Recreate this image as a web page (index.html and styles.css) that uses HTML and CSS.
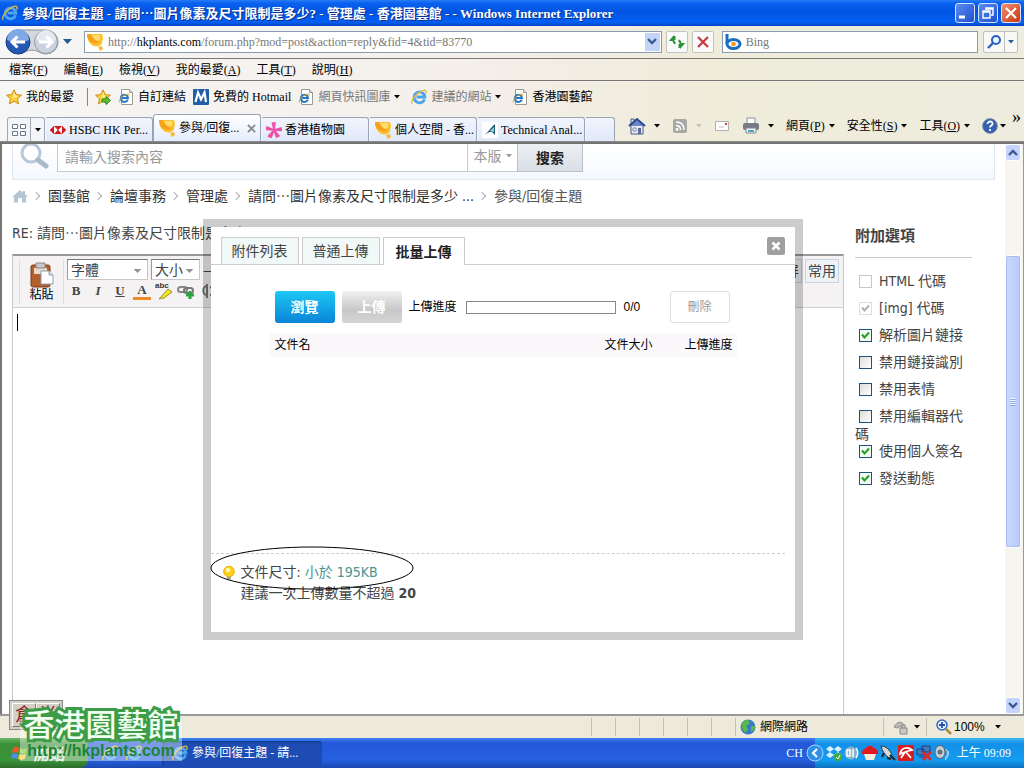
FILE: index.html
```html
<!DOCTYPE html>
<html lang="zh-Hant">
<head>
<meta charset="utf-8">
<title>參與/回復主題 - 管理處 - 香港園藝館</title>
<link rel="stylesheet" href="styles.css">
</head>
<body>
<svg class="defs" aria-hidden="true">
  <symbol id="ie" viewBox="0 0 16 16">
    <path d="M13.600 10.200A5.400 5.400 0 1 1 13.900 8H5.500" fill="none" stroke="#4aa4f0" stroke-width="2.800"/>
    <path d="M1.200 14.800C-.8 12 5 4.300 11 1.800c4-1.600 4.800.4 3.600 2.800" fill="none" stroke="#e8b830" stroke-width="1.300"/>
  </symbol>
  <symbol id="iepage" viewBox="0 0 16 16">
    <path d="M3.500.5h8l3 3v12h-11z" fill="#fff" stroke="#9a9a90"/>
    <path d="M11.500.5v3h3" fill="#ddd" stroke="#9a9a90"/>
    <path d="M9.800 10.600A3.600 3.600 0 1 1 10 9H4" fill="none" stroke="#2578c8" stroke-width="2"/>
    <path d="M1.500 13.500C0 11 5 6.500 9 5.200c2-.6 2.400.3 1.800 1.400" fill="none" stroke="#dca820"/>
  </symbol>
  <symbol id="duck" viewBox="0 0 18 18">
    <path d="M1 1h15l1 4-1 5c-1 3-5 4-8 3C4 12 1 7 1 1z" fill="#fbc02d"/>
    <path d="M1 1h4c1 3 3 6 6 7l3 1c-2 2-5 2-7 1C3 9 1 5 1 1z" fill="#f7a11c"/>
    <path d="M6 2h8c1 3 0 5-2 6-3-1-5-3-6-6z" fill="#ffdc6c"/>
    <path d="M12 14l4-1 1 3-3 2z" fill="#f9b934"/>
  </symbol>
  <symbol id="star" viewBox="0 0 16 16">
    <path d="M8 .8l2.200 4.800 5.200.6-3.900 3.500 1.100 5.200L8 12.300l-4.600 2.600 1.100-5.200L.6 6.200l5.200-.6z" fill="#ffd23c" stroke="#c98a12"/>
    <path d="M8 3l1.300 3.500 3 .4-5 2z" fill="#fff1a0"/>
  </symbol>
  <symbol id="caret" viewBox="0 0 6 4"><path d="M0 0h6L3 3.500z" fill="currentColor"/></symbol>
  <symbol id="chev" viewBox="0 0 10 7"><path d="M1 1l4 4 4-4" fill="none" stroke="#3c5a90" stroke-width="2.400"/></symbol>
</svg>

<header class="browser">
  <div class="titlebar">
    <svg class="i16"><use href="#ie"/></svg>
    <h1 class="title">參與/回復主題 - 請問<span class="cjk">…</span>圖片像素及尺寸限制是多少? - 管理處 - 香港園藝館 - - Windows Internet Explorer</h1>
    <button class="win" aria-label="最小化"><svg class="i16" viewBox="0 0 16 16"><path d="M2 12h6" stroke="#fff" stroke-width="3"/></svg></button>
    <button class="win" aria-label="還原"><svg class="i16" viewBox="0 0 16 16"><path d="M6 5V3h7v7h-2M3 6h7v7H3zM3 7h7M6 4h7" fill="none" stroke="#fff" stroke-width="1.400"/></svg></button>
    <button class="win close" aria-label="關閉"><svg class="i16" viewBox="0 0 16 16"><path d="M3 3l10 10M13 3L3 13" stroke="#fff" stroke-width="2.200"/></svg></button>
  </div>
  <div class="addressbar">
    <svg class="nav" viewBox="0 0 56 28" role="img" aria-label="上一頁 下一頁">
      <path d="M15 2h28a12 12 0 0 1 0 24c-6 0-8-4-14-4s-8 4-14 4z" fill="#d4d8de" stroke="#8a929c"/>
      <circle cx="15" cy="14" r="12" fill="#2358b4" stroke="#1b3c78"/>
      <path d="M4 12a11 11 0 0 1 22 0c-6 3-16 3-22 0z" fill="#7fa8e4"/>
      <path d="M22 14H10M14.500 8.500L9 14l5.500 5.500" fill="none" stroke="#fff" stroke-width="3"/>
      <circle cx="43" cy="14" r="11.500" fill="#c9d2de" stroke="#929aa6"/>
      <path d="M33 12a10 10 0 0 1 20 0c-6 3-14 3-20 0z" fill="#e6eaf0"/>
      <path d="M36 14h12M43.500 8.500L49 14l-5.500 5.500" fill="none" stroke="#fff" stroke-width="3"/>
    </svg>
    <svg class="navdrop" viewBox="0 0 9 5"><path d="M0 0h9L4.500 5z" fill="#1f5c98"/></svg>
    <div class="field url">
      <svg class="i18"><use href="#duck"/></svg>
      <span class="url-text" role="textbox" tabindex="0" aria-label="網址">http://<b>hkplants.com</b>/forum.php?mod=post&amp;action=reply&amp;fid=4&amp;tid=83770</span>
      <button class="drop" aria-label="網址清單"><svg class="chev"><use href="#chev"/></svg></button>
    </div>
    <button class="tool" aria-label="重新整理"><svg class="i16" viewBox="0 0 16 16"><path d="M5.500 2L2 6h2.500c0 2 .5 3 2 3.500M5.500 2v4M10.500 14L14 10h-2.500c0-2-.5-3-2-3.500M10.500 14v-4" fill="none" stroke="#2d9436" stroke-width="2"/></svg></button>
    <button class="tool" aria-label="停止"><svg class="i16" viewBox="0 0 16 16"><path d="M3 3l10 10M13 3L3 13" stroke="#c43a40" stroke-width="2.200"/></svg></button>
    <div class="field search">
      <svg class="i18" viewBox="0 0 18 18"><path d="M3 1v10" stroke="#1c6fc0" stroke-width="3"/><ellipse cx="9.500" cy="11" rx="6.500" ry="4.500" fill="#fff" stroke="#1c6fc0" stroke-width="3"/><circle cx="9.500" cy="11" r="2.300" fill="#f59a1e"/></svg>
      <input class="bing" type="text" placeholder="Bing" aria-label="Bing">
    </div>
    <div class="split">
      <button aria-label="搜尋"><svg class="i16" viewBox="0 0 16 16"><circle cx="10" cy="6" r="4" fill="#eef6ff" stroke="#2860c0" stroke-width="2"/><path d="M7 9l-5 5" stroke="#2860c0" stroke-width="2.400"/></svg></button>
      <button class="narrow" aria-label="搜尋選項"><svg class="caret blue"><use href="#caret"/></svg></button>
    </div>
  </div>
  <nav class="menubar">
    <button>檔案(<u>F</u>)</button><button>編輯(<u>E</u>)</button><button>檢視(<u>V</u>)</button><button>我的最愛(<u>A</u>)</button><button>工具(<u>T</u>)</button><button>說明(<u>H</u>)</button>
  </nav>
  <div class="favbar">
    <button class="fav first"><svg class="i16"><use href="#star"/></svg>我的最愛</button>
    <button class="fav" aria-label="加到我的最愛列"><svg class="i16" viewBox="0 0 16 16"><use href="#star"/><path d="M7 10h4V7.500l4.500 4-4.500 4V13H7z" fill="#5cc030" stroke="#2c8a1c"/></svg></button>
    <button class="fav"><svg class="i16"><use href="#iepage"/></svg>自訂連結</button>
    <button class="fav"><svg class="i16" viewBox="0 0 16 16"><rect width="16" height="16" rx="1" fill="#1f5fa8"/><path d="M2.500 13L5 3.500l3 7 3.500-7L13 13" fill="none" stroke="#fff" stroke-width="2.200"/></svg>免費的 Hotmail</button>
    <button class="fav dim"><svg class="i16"><use href="#iepage"/></svg>網頁快訊圖庫<svg class="caret black"><use href="#caret"/></svg></button>
    <button class="fav dim gap"><svg class="i16"><use href="#ie"/></svg>建議的網站<svg class="caret black"><use href="#caret"/></svg></button>
    <button class="fav gap"><svg class="i16"><use href="#iepage"/></svg>香港園藝館</button>
  </div>
  <div class="tabbar">
    <div class="quick">
      <button aria-label="快速索引標籤"><svg class="i16" viewBox="0 0 16 16"><path d="M1.500 2.500h5v4h-5zM9.500 2.500h5v4h-5zM1.500 9.500h5v4h-5zM9.500 9.500h5v4h-5z" fill="#fff" stroke="#66788e"/></svg></button>
      <button class="narrow" aria-label="索引標籤清單"><svg class="caret black"><use href="#caret"/></svg></button>
    </div>
    <button class="tab"><svg class="i16" viewBox="0 0 16 16"><path d="M4 4h8l4 4-4 4H4L0 8z" fill="#d8141c"/><path d="M4.500 4L8 8l-3.500 4L1 8zM11.500 4L8 8l3.500 4L15 8z" fill="#fff"/><path d="M4 4L0 8l4 4zM12 4l4 4-4 4zM4 4h8L8 8zM4 12h8L8 8z" fill="#d8141c"/></svg>HSBC HK Per...</button>
    <button class="tab active"><svg class="i18"><use href="#duck"/></svg>參與/回復...<svg class="x" viewBox="0 0 10 10"><path d="M1 1l8 8M9 1L1 9" stroke="#888" stroke-width="2"/></svg></button>
    <button class="tab"><svg class="i16" viewBox="0 0 16 16"><path d="M8 8L6.500 1 9 1zM8 8l7-2 .5 2.500zM8 8l5 6-2.500 1zM8 8l-3 7.500L2.500 14zM8 8L.5 7.500 1 5z" fill="#f050a8" stroke="#f050a8" stroke-width="1.600"/></svg>香港植物園</button>
    <button class="tab"><svg class="i18"><use href="#duck"/></svg>個人空間 - 香...</button>
    <button class="tab"><svg class="i16" viewBox="0 0 16 16"><rect width="16" height="16" fill="#fff"/><path d="M2 13C6 11 8 6 13 2v11l-3-3c-3-1-5 2-8 3z" fill="#1d5a74"/><path d="M8 9l4-4v5z" fill="#9cd0d8"/></svg>Technical Anal...</button>
    <button class="tab new" aria-label="新索引標籤"></button>
    <div class="commands">
      <button aria-label="首頁"><svg class="i18" viewBox="0 0 18 18"><path d="M3 2h3v5H3zM3 8h12v9H3z" fill="#e6ecf6" stroke="#4a5a8c"/><path d="M1 9l8-7 8 7" fill="#6c88c8" stroke="#30488c" stroke-width="2"/><path d="M10 11h3v6h-3z" fill="#5a6c94"/><path d="M5 11h3v3H5z" fill="#fff" stroke="#7888a8"/></svg><svg class="caret black"><use href="#caret"/></svg></button>
      <button aria-label="摘要"><svg class="i16" viewBox="0 0 16 16"><rect x="1" y="1" width="14" height="14" rx="2" fill="#a8a8a4"/><path d="M4 4c5 0 8 3 8 8M4 7.500c3 0 4.500 1.500 4.500 4.500" fill="none" stroke="#fff" stroke-width="1.500"/><circle cx="5" cy="11.500" r="1.400" fill="#fff"/></svg><svg class="caret pale"><use href="#caret"/></svg></button>
      <button aria-label="閱讀郵件"><svg class="i16" viewBox="0 0 16 16"><path d="M1.500 3.500h13v9h-13z" fill="#fff" stroke="#b0b0ac"/><path d="M11 5h2v2h-2z" fill="#d04040"/><path d="M5 9h5" stroke="#bbb"/></svg></button>
      <button aria-label="列印"><svg class="i18" viewBox="0 0 18 18"><path d="M5 1h8v6H5z" fill="#fff" stroke="#8a8e98"/><rect x="1" y="6" width="16" height="7" rx="2" fill="#777b86"/><path d="M4 11h10v5H4z" fill="#eef4fa" stroke="#888"/><path d="M6 14h6" stroke="#48a0d0" stroke-width="2"/></svg><svg class="caret black"><use href="#caret"/></svg></button>
      <button><span>網頁(<u>P</u>)</span><svg class="caret black"><use href="#caret"/></svg></button>
      <button><span>安全性(<u>S</u>)</span><svg class="caret black"><use href="#caret"/></svg></button>
      <button><span>工具(<u>O</u>)</span><svg class="caret black"><use href="#caret"/></svg></button>
      <button class="tight" aria-label="說明"><svg class="i16" viewBox="0 0 16 16"><circle cx="8" cy="8" r="7.300" fill="#3560b0" stroke="#6c7c9c"/><path d="M5.500 6c0-3.500 5.500-3.200 5 0-.3 1.600-2.500 1.600-2.500 3.600M8 11v2" fill="none" stroke="#fff" stroke-width="1.800"/></svg><svg class="caret black"><use href="#caret"/></svg></button>
    </div>
    <span class="more">»</span>
  </div>
</header>

<div class="viewport">
  <main class="page">
    <form class="site-search">
      <svg class="magnifier" viewBox="0 0 30 26"><circle cx="12" cy="9" r="9" fill="#fff" stroke="#b9c8d6" stroke-width="3"/><path d="M19 16l8 6" stroke="#a9bac9" stroke-width="5" stroke-linecap="round"/></svg>
      <input class="query" type="text" placeholder="請輸入搜索內容" aria-label="搜索內容">
      <button type="button" class="scope">本版<svg class="caret"><use href="#caret"/></svg></button>
      <button type="button" class="go">搜索</button>
    </form>
    <nav class="crumbs">
      <svg class="i16" viewBox="0 0 16 16"><path d="M8 2L0 9h2v5.500h4V10h4v4.500h4V9h2l-3-3V3h-2v1.500z" fill="#b4c6d4"/></svg>
      <i></i><a href="#">園藝館</a><i></i><a href="#">論壇事務</a><i></i><a href="#">管理處</a><i></i><a href="#">請問<span class="cjk">…</span>圖片像素及尺寸限制是多少 ...</a><i></i><a href="#" class="here">參與/回復主題</a>
    </nav>
    <div class="compose">
      <section class="post">
        <h2 class="subject">RE: 請問<span class="cjk">…</span>圖片像素及尺寸限制是多少?</h2>
        <div class="editor">
          <div class="tools">
            <button class="paste"><svg class="clip" viewBox="0 0 24 26"><rect x="1" y="3" width="19" height="22" rx="2" fill="#b4602c" stroke="#7c3c18"/><path d="M4 6h13v6H4z" fill="#e8dcd0"/><path d="M6 1h9v5H6z" fill="#c8c8cc" stroke="#888"/><path d="M11 9h8l4 4v9H11z" fill="#fff" stroke="#8ca0b4"/><path d="M19 9v4h4" fill="#dce6ee" stroke="#8ca0b4"/></svg>粘貼</button>
            <div class="format">
              <div class="row">
                <select class="font" aria-label="字體"><option>字體</option></select>
                <select class="size" aria-label="大小"><option>大小</option></select>
                <button aria-label="分隔線">—</button>
              </div>
              <div class="row marks">
                <button><b>B</b></button><button><em>I</em></button><button><u>U</u></button><button class="color">A</button>
                <button aria-label="背景色"><svg class="i18" viewBox="0 0 18 18"><path d="M4 17l9-10 4 3-8 6z" fill="#f4e020" stroke="#9c9428"/><text x="0" y="6" class="abc">abc</text></svg></button>
                <button aria-label="插入鏈接"><svg class="i18" viewBox="0 0 18 18"><rect x="1" y="5" width="9" height="5" rx="2.500" fill="none" stroke="#888" stroke-width="2"/><rect x="7" y="6" width="9" height="5" rx="2.500" fill="none" stroke="#777" stroke-width="2"/><path d="M13 9v8M9 13h8" stroke="#28a43c" stroke-width="3"/></svg></button>
                <button aria-label="取消鏈接"><svg class="i18" viewBox="0 0 18 18"><path d="M8 4c-5 0-5 9 0 9M8 2v14M11 5c5 1 5 7 0 8" fill="none" stroke="#777" stroke-width="2"/></svg></button>
              </div>
            </div>
            <div class="modes"><button>全屏</button><button>常用</button></div>
          </div>
          <textarea class="text" aria-label="內容"></textarea>
          <span class="cursor"></span>
        </div>
      </section>
      <aside class="options">
        <h3>附加選項</h3>
        <ul>
          <li><label><input type="checkbox" disabled>HTML 代碼</label></li>
          <li><label><input type="checkbox" disabled checked>[img] 代碼</label></li>
          <li><label><input type="checkbox" checked>解析圖片鏈接</label></li>
          <li><label><input type="checkbox">禁用鏈接識別</label></li>
          <li><label><input type="checkbox">禁用表情</label></li>
          <li><label><input type="checkbox">禁用編輯器代碼</label></li>
          <li><label><input type="checkbox" checked>使用個人簽名</label></li>
          <li><label><input type="checkbox" checked>發送動態</label></li>
        </ul>
      </aside>
    </div>

    <div class="dialog" role="dialog" aria-label="批量上傳">
      <div class="dialog-tabs">
        <button>附件列表</button><button>普通上傳</button><button class="on">批量上傳</button>
        <button class="dismiss" aria-label="關閉"><svg viewBox="0 0 10 10"><path d="M1.500 1.500l7 7M8.500 1.500l-7 7" stroke="#fff" stroke-width="2.600"/></svg></button>
      </div>
      <div class="upload">
        <div class="upload-bar">
          <button class="browse">瀏覽</button><button class="send" disabled>上傳</button>
          <span>上傳進度</span><div class="meter" role="progressbar" aria-label="上傳進度"></div><span class="count">0/0</span>
          <button class="remove" disabled>刪除</button>
        </div>
        <table class="files">
          <thead><tr><th>文件名</th><th class="c2">文件大小</th><th class="c3">上傳進度</th></tr></thead>
        </table>
      </div>
      <div class="tip">
        <svg class="bulb" viewBox="0 0 12 14"><circle cx="6" cy="5.500" r="5.300" fill="#fcd116" stroke="#e8a808"/><circle cx="5" cy="4" r="2.200" fill="#fff6b0"/><path d="M4 11h4v2.500H4z" fill="#a8a8a8"/></svg>
        <div>
          <p>文件尺寸: <span class="limit">小於 195KB</span></p>
          <p>建議一次上傳數量不超過 <strong>20</strong></p>
        </div>
        <svg class="ring" viewBox="0 0 204 44"><ellipse cx="102" cy="22" rx="101" ry="21" fill="none" stroke="#000"/></svg>
      </div>
    </div>
  </main>
  <div class="scroll" aria-hidden="true">
    <span class="arrow up"><svg class="chev"><use href="#chev"/></svg></span>
    <span class="thumb"></span>
    <span class="arrow"><svg class="chev"><use href="#chev"/></svg></span>
  </div>
</div>

<footer class="bottom">
  <div class="status">
    <span class="cell"></span><span class="cell"></span><span class="cell"></span><span class="cell"></span><span class="cell"></span><span class="cell"></span>
    <span class="cell zone"><svg class="i16" viewBox="0 0 16 16"><circle cx="8" cy="8" r="7.500" fill="#3a78c8"/><path d="M3 3c3-3 6-2 7 0L8 6 6 7l2 3-2 4C1 11 1 6 3 3zM11 7l4 0c0 3-1 5-4 6z" fill="#58b848"/></svg>網際網路</span>
    <span class="cell lock"><svg class="i16" viewBox="0 0 16 16"><path d="M1 8c3-6 8-6 10-2L4 9z" fill="#b8b8b4" stroke="#909090"/><path d="M7 9h7v6H7zM9 9V6h3v3" fill="#c8c8c4" stroke="#888"/></svg><svg class="caret black"><use href="#caret"/></svg></span>
    <span class="cell zoom"><svg class="i16" viewBox="0 0 16 16"><circle cx="6" cy="6" r="5" fill="#e8f2ff" stroke="#3468c0" stroke-width="1.500"/><path d="M3 6h6M6 3v6" stroke="#2450b0" stroke-width="1.800"/><path d="M10 10l5 5" stroke="#b08840" stroke-width="2.500"/></svg>100%<svg class="caret black"><use href="#caret"/></svg></span>
  </div>
  <div class="taskbar">
    <button class="start"><svg class="i18" viewBox="0 0 18 18"><path d="M2 4c3-2 4-1 6 0L7 9C5 8 3 8 1 9z" fill="#f05828"/><path d="M9 4c2 1 4 2 7 0l-1 5c-2 1-4 1-7 0z" fill="#7ccc38"/><path d="M1 10c2-1 4-1 6 0l-1 5c-2-1-4-1-6 0z" fill="#4890f0"/><path d="M8 10c2 1 4 1 7 0l-1 5c-3 1-5 1-7 0z" fill="#fcd030"/></svg>開始</button>
    <span class="launch"><svg class="i16"><use href="#ie"/></svg><svg class="i16"><use href="#ie"/></svg></span>
    <button class="task"><svg class="i16"><use href="#ie"/></svg>參與/回復主題 - 請...</button>
    <span class="lang">CH</span>
    <div class="tray">
      <svg class="i18 expand" viewBox="0 0 18 18"><circle cx="9" cy="9" r="8" fill="#2f8fe8" stroke="#a8d4fc"/><path d="M11 5L7 9l4 4" fill="none" stroke="#fff" stroke-width="2.200"/></svg>
      <svg class="i16" viewBox="0 0 16 16"><path d="M4 1l4 3-4 3-4-3zM12 1l4 3-4 3-4-3zM4 7l4 3-4 3-4-3zM12 7l4 3-4 3-4-3z" fill="#d8f0ff"/><circle cx="12" cy="12" r="4" fill="#40a838"/><path d="M10 12l2 2 2-4" fill="none" stroke="#fff"/></svg>
      <svg class="i16" viewBox="0 0 16 16"><circle cx="7" cy="8" r="6.500" fill="#88b4d0"/><path d="M3 5h3v6H3zM9 4v8M12 3c3 4 2 7 0 10" fill="none" stroke="#fff" stroke-width="1.500"/></svg>
      <svg class="i16" viewBox="0 0 16 16"><path d="M0 9c0-5 3-5 4-6 2-3 6-3 8 0 2 1 4 1 4 6z" fill="#e01820"/><path d="M2 9h12l-2 6H4z" fill="#f4ecdc"/></svg>
      <svg class="i16" viewBox="0 0 16 16"><path d="M1 1c5 0 9 4 11 9l-3 3C5 10 2 6 1 1z" fill="#d4d8dc" stroke="#333"/><path d="M10 10l5 5M4 8l-2 4M11 14l-4-1" stroke="#222" stroke-width="2"/></svg>
      <svg class="i16" viewBox="0 0 16 16"><rect width="16" height="16" rx="1" fill="#d81c20"/><path d="M2 9C3 3 9 1 14 5l-4 1-3 1zM8 7l5 6M7 7l-4 6" fill="none" stroke="#fff" stroke-width="1.800"/></svg>
      <svg class="i16" viewBox="0 0 16 16"><path d="M1 4h7v6H1zM6 1h8v6H6zM3 12h8" fill="#4878c0" stroke="#1c3c7c"/><path d="M7 7l8 8M15 7l-8 8" stroke="#e02828" stroke-width="2.500"/></svg>
      <svg class="i16" viewBox="0 0 16 16"><ellipse cx="6" cy="7" rx="5" ry="6.500" fill="#c4ccd4" stroke="#58646c"/><circle cx="6" cy="7" r="2.500" fill="#68747c"/><path d="M12 4c2 3 2 6-1 9M14 6c1 3 0 6-3 9" fill="none" stroke="#d4e4f4"/></svg>
      <time>上午 09:09</time>
    </div>
  </div>
  <div class="ime"><span>倉</span><span>半</span></div>
  <div class="watermark"><div class="wm-name">香港園藝館</div><div class="wm-url">http://hkplants.com</div></div>
</footer>
</body>
</html>
```
FILE: styles.css
```css
* { box-sizing: border-box; }
body {
  margin: 0; min-height: 100vh; display: flex; flex-direction: column;
  font: 12px/16px "Liberation Serif", "Noto Sans CJK TC", serif; color: #000; background: #fff;
}
button, input, select, textarea { font: inherit; color: inherit; margin: 0; padding: 0; border: 0; background: none; border-radius: 0; }
button { display: inline-flex; align-items: center; justify-content: center; white-space: nowrap; }
svg { flex: none; display: block; }
h1, h2, h3, p, ul { margin: 0; padding: 0; font-weight: normal; }
.cjk { font-family: "Noto Sans CJK TC", sans-serif; }
.defs { position: absolute; width: 0; height: 0; }
.i16 { width: 16px; height: 16px; }
.i18 { width: 18px; height: 18px; }
.caret { width: 6px; height: 4px; }
.black { color: #000; }
.blue { color: #2c5c9c; }
.pale { color: #c4c4bc; }
.chev { width: 10px; height: 7px; }

/* browser chrome */
.browser { background: linear-gradient(90deg, #f6f6f6, #f4efea 45%, #efecda 70%, #eeecdf); border-bottom: 2px solid #737373; }
.titlebar {
  display: flex; align-items: center; gap: 3px; height: 26px; padding: 0 3px 0 2px;
  background: linear-gradient(#2a7cf4 0, #0a62f0 3px, #0053e0 12px, #0560f6 22px, #0344c4);
}
.title { flex: 1; padding-left: 1px; font-size: 13px; line-height: 24px; font-weight: bold; color: #fff; white-space: nowrap; overflow: hidden; text-shadow: 1px 1px #0a2c88; }
.win { width: 20px; height: 20px; border: 1px solid #d4e2fc; border-radius: 3px; background: linear-gradient(135deg, #5c8cf0, #1c50d0); }
.win.close { background: linear-gradient(135deg, #f09070, #cc3410); }
.addressbar { display: flex; align-items: center; height: 33px; padding: 0 6px 1px 3px; border-bottom: 1px solid #777; }
.nav { width: 56px; height: 28px; }
.navdrop { width: 9px; height: 5px; margin: 0 12px 0 4px; }
.field { display: flex; align-items: center; gap: 4px; height: 22px; padding: 1px; background: #fff; border: 1px solid #8a9ab0; }
.url { flex: 580 1 0; margin-right: 4px; }
.url-text { flex: 1; color: #777; white-space: nowrap; overflow: hidden; }
.url-text b { font-weight: normal; color: #000; }
.drop { width: 15px; height: 18px; background: #c4d4f8; }
.tool { width: 22px; height: 22px; margin-right: 4px; border: 1px solid #c4c4c0; border-radius: 2px; background: #fafafa; }
.search { flex: 255 1 0; margin: 0 5px 0 4px; }
.bing { flex: 1; min-width: 0; }
.bing::placeholder { color: #777; opacity: 1; }
.split { display: flex; height: 22px; border: 1px solid #c0c0c4; border-radius: 2px; background: #f8f8f6; }
.split button { width: 20px; }
.split .narrow { width: 13px; border-left: 1px solid #c0c0c4; }
.menubar { display: flex; gap: 16px; height: 22px; padding-left: 9px; border-bottom: 1px solid #777; }
.favbar { display: flex; align-items: center; height: 31px; padding-left: 6px; gap: 7px; }
.fav { gap: 4px; }
.fav.first { padding-right: 13px; border-right: 1px solid #888; height: 18px; }
.fav.dim { color: #777; }
.fav.gap { margin-left: 4px; }
.tabbar { display: flex; align-items: flex-end; height: 30px; padding-left: 7px; border-bottom: 1px solid #8c8c8c; }
.quick { display: flex; flex: none; height: 24px; width: 38px; border: 1px solid #a0a8b4; border-bottom: 0; border-radius: 3px 3px 0 0; background: #f4f5f8; }
.quick button { flex: 1; }
.quick .narrow { flex: none; width: 14px; border-left: 1px solid #a0a8b4; }
.tab {
  flex: 0 1 108px; height: 24px; justify-content: flex-start; gap: 3px; padding: 0 4px; overflow: hidden;
  border: 1px solid #98a4b4; border-bottom: 0; border-left-color: #f8f8f8; border-radius: 3px 3px 0 0; background: linear-gradient(#f2f5fc, #e0e8fa);
}
.tab.active { height: 27px; background: linear-gradient(#fff, #e4ecfc); border-left-color: #98a4b4; }
.tab.new { flex: 0 1 30px; }
.x { width: 9px; height: 9px; margin-left: auto; }
.commands { display: flex; flex: none; align-items: center; gap: 12px; margin-left: 13px; height: 30px; }
.commands button { gap: 4px; }
.commands button:nth-child(-n+4) { gap: 8px; }
.commands .tight { gap: 2px; }
.more { align-self: flex-start; margin-left: auto; padding-right: 3px; font-size: 18px; line-height: 10px; }

/* page */
.viewport { flex: 1; display: flex; border-left: 2px solid #777; background: #fff; }
.page { flex: 1; min-width: 0; position: relative; display: flex; flex-direction: column; font: 14px/20px "DejaVu Sans Condensed", "Noto Sans CJK TC", sans-serif; color: #444; }
.site-search { display: flex; height: 36px; margin: 0 10px; padding: 0 0 7px 6px; border: 1px solid #e0e8f2; border-top: 0; background: linear-gradient(#fff, #f4f8fe); }
.magnifier { width: 30px; height: 26px; margin-right: 8px; }
.query { width: 411px; padding: 0 7px 2px; border: 1px solid #c8ccd0; border-top: 0; background: #fff; }
.query::placeholder { color: #999; opacity: 1; }
.scope { width: 49px; gap: 4px; padding-bottom: 4px; color: #999; background: #fff; border-bottom: 1px solid #c8ccd0; }
.go { width: 66px; font-weight: bold; color: #222; border: 1px solid #b8c0c8; border-top: 0; background: linear-gradient(#eef1f4, #d8dee6); }
.crumbs { display: flex; align-items: center; height: 31px; padding-left: 10px; white-space: nowrap; }
.crumbs a { color: #333; text-decoration: none; }
.crumbs a.here { color: #555; }
.crumbs i { width: 6px; height: 6px; margin: 0 9px 0 5px; border: solid #b0b0b0; border-width: 1px 1px 0 0; transform: rotate(45deg); }
.compose { flex: 1; display: flex; padding-left: 10px; }
.post { flex: 1; min-width: 0; display: flex; flex-direction: column; }
.subject { font-size: 14px; height: 43px; padding-top: 11px; white-space: nowrap; overflow: hidden; }
.editor { flex: 1; display: flex; flex-direction: column; position: relative; border: 1px solid #c8c8c8; border-top: 2px solid #999; border-bottom: 0; }
.tools { display: flex; height: 52px; padding: 3px 4px; background: #f5f2f4; border-bottom: 1px solid #d0d0d0; }
.paste { flex-direction: column; width: 45px; margin: 0 3px 0 2px; font-size: 12px; line-height: 14px; color: #000; border: solid #ddd; border-width: 0 1px; }
.clip { width: 24px; height: 26px; }
.row { display: flex; gap: 3px; height: 21px; }
.row select {
  appearance: none; padding-left: 3px; line-height: 18px; border: 1px solid #c8c8c8; border-top-color: #777; border-left-color: #999;
  background-color: #fff; background-repeat: no-repeat;
  background-image: linear-gradient(to bottom left, #999 50%, transparent 50%), linear-gradient(to bottom right, #999 50%, transparent 50%);
  background-size: 4px 4px; background-position: right 9px top 9px, right 5px top 9px;
}
.row .font { width: 81px; }
.row .size { width: 49px; }
.marks { gap: 4px; margin-top: 2px; font: bold 13px/18px "Liberation Serif", serif; }
.marks button { width: 18px; height: 18px; }
.marks .color { height: 18px; line-height: 14px; border-bottom: 3px solid #f08828; }
.abc { font: bold 8px "Liberation Sans", sans-serif; fill: #333; }
.modes { display: flex; gap: 3px; margin-left: auto; }
.modes button { width: 34px; height: 24px; border: 1px solid #c8d4e0; background: #eef1f6; }
.text { flex: 1; width: 100%; resize: none; outline: 0; }
.cursor { position: absolute; left: 4px; top: 58px; width: 1px; height: 17px; background: #000; }
.options { width: 117px; margin: 0 33px 0 11px; }
.options h3 { height: 47px; padding-top: 15px; font-size: 15px; font-weight: bold; border-bottom: 1px solid #ccc; }
.options ul { list-style: none; padding-top: 10px; line-height: 8px; }
.options input {
  appearance: none; width: 13px; height: 13px; margin: 7px 7px 7px 4px; vertical-align: middle;
  border: 1px solid #1c5180; background: linear-gradient(135deg, #dcdcd8, #fff);
}
.options input:checked {
  background: #f2faf2 url("data:image/svg+xml,%3Csvg xmlns='http://www.w3.org/2000/svg' viewBox='0 0 11 11'%3E%3Cpath d='M2 4.500l2.500 3L9 2.500' fill='none' stroke='%2321a121' stroke-width='2'/%3E%3C/svg%3E");
}
.options input:disabled { border-color: #cac8bb; background-color: #fff; filter: grayscale(1); }
.options input:disabled:checked { opacity: .6; }
.options input:disabled:not(:checked) { background: #fff; }

/* upload dialog */
.dialog {
  position: absolute; top: 75px; left: calc(50% - 301px); width: 600px; min-height: 421px; display: flex; flex-direction: column;
  border: 8px solid rgba(0, 0, 0, .2); background: #fff; background-clip: padding-box;
}
.dialog-tabs { display: flex; gap: 3px; height: 38px; padding: 10px 10px 0; border-bottom: 1px solid #cdcdcd; }
.dialog-tabs button { width: 78px; height: 27px; border: 1px solid #cdcdcd; border-bottom: 0; background: #f0f8f8; }
.dialog-tabs .on { width: 82px; height: 28px; font-weight: bold; color: #222; background: #fff; }
.dialog-tabs .dismiss { width: 18px; height: 18px; margin-left: auto; border: 0; border-radius: 2px; background: #a0a0a0; }
.dismiss svg { width: 10px; height: 10px; }
.upload { flex: 1; padding: 25px 58px 0 59px; font: 12px/16px "Liberation Sans", "Noto Sans CJK TC", sans-serif; color: #000; }
.upload-bar { display: flex; align-items: center; height: 34px; padding-left: 5px; }
.upload-bar button { width: 60px; height: 32px; border-radius: 3px; font-size: 14px; font-weight: bold; }
.browse { color: #fff; background: linear-gradient(#1cc8f4, #0a84d8); }
.send { margin: 0 7px; color: #fff; background: linear-gradient(#f2f0f2, #c8c8c8 60%, #d4d4d4); }
.meter { width: 150px; height: 13px; margin: 0 8px 0 9px; border: 1px solid #888; }
.upload-bar .remove { margin: 0 7px 0 auto; font-size: 12px; font-weight: normal; color: #999; border: 1px solid #ddd; background: #fff; }
.files { width: 100%; margin-top: 9px; border-collapse: collapse; background: #fbf8fb; }
.files th { height: 24px; padding: 0 0 0 5px; font-weight: normal; text-align: left; }
.files .c2 { width: 80px; }
.files .c3 { width: 57px; }
.tip { position: relative; display: flex; gap: 6px; margin: 0 10px 0 0; padding: 8px 0 28px 12px; line-height: 21px; border-top: 1px dashed #ccc; }
.bulb { width: 12px; height: 14px; margin-top: 4px; }
.limit { color: #4a9494; }
.ring { position: absolute; left: -1px; top: -8px; width: 204px; height: 44px; }

/* page scroll bar */
.scroll { display: flex; flex-direction: column; width: 19px; padding-right: 2px; border-right: 1px solid #999; background: #f6f5f0; }
.arrow { display: flex; align-items: center; justify-content: center; height: 17px; border: 1px solid #fff; border-radius: 3px; background: #c4d4fc; }
.up svg { transform: rotate(180deg); }
.thumb { flex: 1; margin: 94px 0 149px; border: 1px solid #fff; outline: 1px solid #a8bcf0; outline-offset: -2px; border-radius: 3px; background: repeating-linear-gradient(#eef4ff 0 1px, #8cb0f8 1px 2px) center / 6px 8px no-repeat, linear-gradient(90deg, #cad9fd, #b8cbf8); }

/* status bar and taskbar */
.bottom { position: relative; }
.status { display: flex; align-items: center; justify-content: flex-end; height: 24px; padding-right: 5px; border-top: 2px solid #999; background: #edeadb; }
.cell { display: flex; align-items: center; gap: 4px; width: 24px; height: 18px; border-left: 1px solid #c4c1b2; }
.zone { width: 148px; padding-left: 4px; }
.lock { width: 43px; gap: 5px; padding-left: 9px; }
.zoom { width: 93px; padding-left: 9px; font-family: "Liberation Sans", sans-serif; gap: 2px; }
.zoom .caret { margin-left: auto; margin-right: 18px; }
.taskbar { display: flex; align-items: center; height: 30px; color: #fff; background: linear-gradient(#3c80f0, #2458d8 5px, #2460e0 22px, #1c48b0); }
.start { align-self: stretch; width: 88px; gap: 4px; font: italic bold 16px/20px "Noto Sans CJK TC", sans-serif; color: #d8ecd8; border-radius: 0 8px 8px 0; background: linear-gradient(#6cb868, #3c9038 6px, #3a9438 22px, #2c6c2c); }
.start svg { margin-left: -12px; }
.launch { display: flex; gap: 8px; width: 74px; padding-left: 14px; }
.task { justify-content: flex-start; gap: 4px; width: 160px; height: 25px; padding-left: 10px; border-radius: 3px; background: #1c4cb4; box-shadow: inset 1px 1px 2px #123480; }
.lang { margin-left: auto; padding-right: 12px; }
.tray { display: flex; align-items: center; gap: 2px; align-self: stretch; width: 209px; padding-right: 13px; background: linear-gradient(#3cb4f4, #1290e8 6px, #149cf0 22px, #0c70c0); }
.expand { margin-left: -9px; }
.tray time { margin-left: auto; }
.ime { position: absolute; left: 9px; bottom: 38px; display: flex; padding: 2px; background: #d4d0c8; border: 1px solid #888; }
.ime span { width: 24px; height: 24px; font: 18px/22px "Liberation Serif", "Noto Sans CJK TC", serif; text-align: center; color: #8c1c28; border: 1px solid #777; border-left-color: #fff; border-top-color: #fff; }
.watermark { position: absolute; z-index: 1; left: 20px; bottom: 7px; width: 162px; }
.watermark::before { content: ""; position: absolute; inset: 14px 0 0; background: rgba(255, 255, 255, .4); z-index: -1; }
.wm-name { font: 500 31px/36px "Noto Sans CJK TC", serif; color: #f0fff0; text-align: center; -webkit-text-stroke: 6px #3c9c48; paint-order: stroke fill; white-space: nowrap; }
.wm-url { font: bold 16px/20px "Liberation Sans", sans-serif; color: #1c8434; text-align: center; white-space: nowrap; }
```
